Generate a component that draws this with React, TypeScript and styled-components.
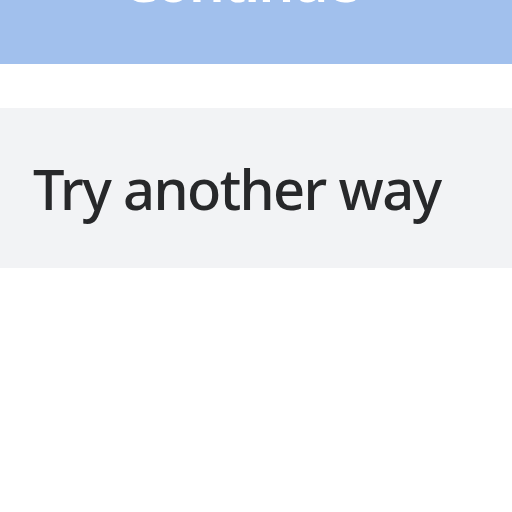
import React from 'react'
import styled, { createGlobalStyle } from 'styled-components'

const GlobalStyle = createGlobalStyle`
  html, body {
    margin: 0;
    padding: 0;
    background: #fff;
    font-family: 'Noto Sans', 'Open Sans', sans-serif;
    overflow: hidden;
  }
`

const Page = styled.div`
  display: flex;
  flex-direction: column;
  width: 512px;
  height: 512px;
`

const ContinueButton = styled.button`
  display: flex;
  align-items: center;
  justify-content: center;
  height: 168px;
  margin-top: -104px;
  padding: 0 32px 0 0;
  border: 0;
  background-color: #a1c0ed;
  color: #fff;
  font-family: inherit;
  font-size: 56px;
  font-weight: 600;
  letter-spacing: -1.6px;
  flex-shrink: 0;
`

const Gap = styled.div`
  height: 44px;
  flex-shrink: 0;
`

const AltButton = styled.button`
  display: flex;
  align-items: center;
  height: 160px;
  padding: 0 33px;
  border: 0;
  background-color: #f2f3f5;
  color: #27282a;
  font-family: inherit;
  font-size: 56px;
  font-weight: 500;
  letter-spacing: -1.6px;
  text-align: left;
  flex-shrink: 0;
`

const App: React.FC = () => (
  <>
    <GlobalStyle />
    <Page>
      <ContinueButton>Continue</ContinueButton>
      <Gap />
      <AltButton>Try another way</AltButton>
    </Page>
  </>
)

export default App
